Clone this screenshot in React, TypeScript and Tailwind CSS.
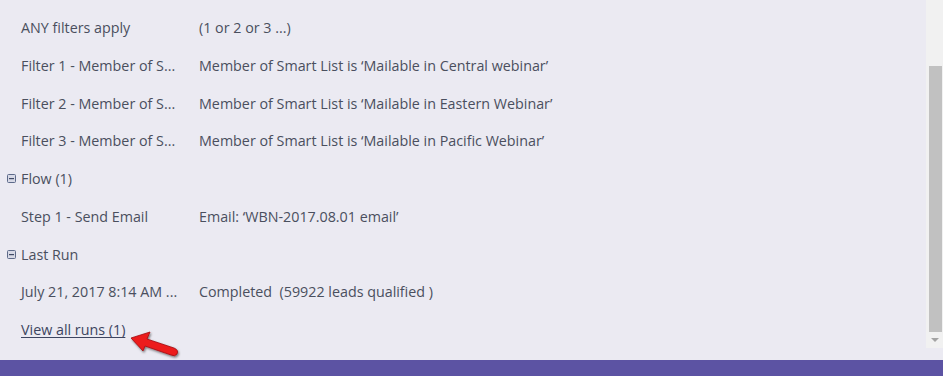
import React from 'react'

interface Row {
  label: string
  value?: string
  section?: boolean
}

const ROWS: Row[] = [
  { label: 'ANY filters apply', value: '(1 or 2 or 3 ...)' },
  { label: 'Filter 1 - Member of S...', value: 'Member of Smart List is \u2018Mailable in Central webinar\u2019' },
  { label: 'Filter 2 - Member of S...', value: 'Member of Smart List is \u2018Mailable in Eastern Webinar\u2019' },
  { label: 'Filter 3 - Member of S...', value: 'Member of Smart List is \u2018Mailable in Pacific Webinar\u2019' },
  { label: 'Flow (1)', section: true },
  { label: 'Step 1 - Send Email', value: 'Email: \u2018WBN-2017.08.01 email\u2019' },
  { label: 'Last Run', section: true },
  { label: 'July 21, 2017 8:14 AM ...', value: 'Completed  (59922 leads qualified )' },
]

function CollapseIcon() {
  return (
    <svg width="9" height="9" viewBox="0 0 9 9" className="shrink-0">
      <rect x="0.5" y="0.5" width="8" height="8" rx="1" fill="#d7d9e6" stroke="#5d6a8a" />
      <rect x="2" y="4" width="5" height="1.2" fill="#3f4a66" />
    </svg>
  )
}

// red callout arrow pointing at the link
function RedArrow() {
  return (
    <svg width="56" height="34" viewBox="0 0 56 34" className="absolute left-[128px] top-[17px]">
      <defs>
        <filter id="sh" x="-20%" y="-20%" width="140%" height="160%">
          <feDropShadow dx="1" dy="1.5" stdDeviation="1" floodColor="#000" floodOpacity="0.5" />
        </filter>
      </defs>
      <path
        d="M3 10 L22 4 L19 11 L46 20 Q51 22 49 26 Q47 29 43 27 L17 18 L15 23 Z"
        fill="#ec1a1d"
        stroke="#a10e11"
        strokeWidth="0.8"
        strokeLinejoin="round"
        filter="url(#sh)"
      />
    </svg>
  )
}

export default function App() {
  return (
    <div className="flex h-screen w-full flex-col bg-[#ebeaf2] font-['Open_Sans',sans-serif] text-[14.3px] text-[#4a4f5e]">
      <div className="flex min-h-0 flex-1">
        <div className="flex-1 pt-[9px]">
          {ROWS.map((row) => (
            <div key={row.label} className="flex h-[37.75px] items-center">
              <div className="flex w-[199px] items-center">
                <div className="flex w-[21px] justify-center pl-[1px]">
                  {row.section && <CollapseIcon />}
                </div>
                <span className="whitespace-nowrap">{row.label}</span>
              </div>
              {row.value && <span className="whitespace-pre">{row.value}</span>}
            </div>
          ))}
          <div className="relative flex h-[37.75px] items-center pl-[21px]">
            <a className="cursor-pointer text-[#3d4560] underline underline-offset-2">View all runs (1)</a>
            <RedArrow />
          </div>
        </div>
        <div className="flex h-[348px] w-[17px] flex-col bg-[#f1f1f1]">
          <div className="h-[66px]" />
          <div className="ml-[3px] h-[266px] w-[13px] bg-[#c1c1c1]" />
          <div className="flex flex-1 items-center justify-center">
            <div className="h-0 w-0 border-x-[4px] border-t-[4px] border-x-transparent border-t-[#a3a3a3]" />
          </div>
        </div>
      </div>
      <div className="h-4 bg-[#5c53a3]" />
    </div>
  )
}
